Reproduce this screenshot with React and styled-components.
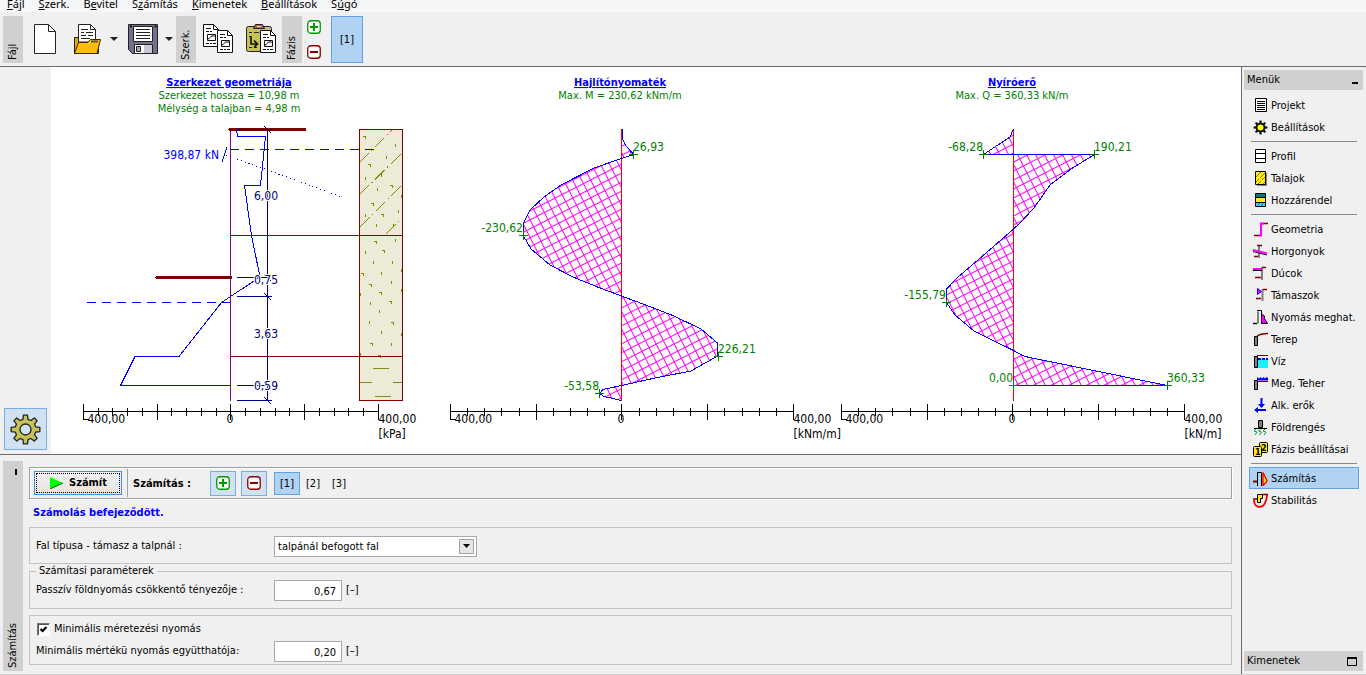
import React from 'react'
import styled, { createGlobalStyle } from 'styled-components'

const GlobalStyle = createGlobalStyle`
    * {
        box-sizing: border-box;
    }

    body {
        margin: 0;
        background: #f0f0f0;
        color: #000;
        font-family: "DejaVu Sans Condensed", "DejaVu Sans", sans-serif;
        font-size: 11px;
        line-height: 14px;
    }

    button, input, select {
        font: inherit;
        color: inherit;
    }
`

const line = '#6d6a70'

const Page = styled.div`
    display: flex;
    flex-direction: column;
    min-height: 100vh;
    border-bottom: 1px solid #d0d0d0;
`

const MenuBar = styled.nav`
    display: flex;
    align-items: flex-end;
    gap: 14px;
    height: 12px;
    padding-left: 7px;
    overflow: hidden;
    background: #f5f6f8;
    font-family: "Noto Sans", sans-serif;
    font-size: 11px;
    line-height: 16px;
`

const MenuLink = styled.a`
    color: #000;
    text-decoration: none;
`

const ToolBar = styled.header`
    display: flex;
    align-items: center;
    height: 55px;
    padding: 0 3px;
    border-bottom: 1px solid ${line};
`

const ToolTab = styled.div`
    display: flex;
    align-items: center;
    justify-content: flex-start;
    width: 20px;
    height: 47px;
    padding: 3px 0;
    background: #d0d0d0;
    writing-mode: vertical-rl;
    transform: rotate(180deg);
    line-height: 20px;
`

const ToolGroup = styled.div`
    display: flex;
    align-items: center;
    gap: ${props => props.$gap || 0}px;
    padding: 0 ${props => props.$right || 0}px 0 ${props => props.$left || 0}px;
`

const ToolButton = styled.button`
    display: flex;
    padding: 0;
    border: 0;
    background: none;
`

const StackGroup = styled.div`
    display: flex;
    flex-direction: column;
    gap: 11px;
    padding: 0 10px 0 5px;
`

const StageButton = styled.button`
    display: flex;
    align-items: center;
    justify-content: center;
    width: ${props => props.$big ? 32 : 26}px;
    height: ${props => props.$big ? 47 : 23}px;
    padding: 2px 0 0;
    border: 1px solid ${props => props.$active ? '#62a2e4' : 'transparent'};
    background: ${props => props.$active ? '#b1d3f3' : 'transparent'};
`

const Body = styled.div`
    display: flex;
    flex: 1;
`

const Main = styled.main`
    display: flex;
    flex: 1;
    flex-direction: column;
    min-width: 0;
`

const DrawingRow = styled.section`
    display: flex;
    flex: 1;
    min-height: 0;
    border-bottom: 1px solid ${line};
`

const DrawingTools = styled.div`
    display: flex;
    align-items: flex-end;
    width: 51px;
    padding: 4px;
`

const GearButton = styled.button`
    display: flex;
    align-items: center;
    justify-content: center;
    width: 43px;
    height: 42px;
    padding: 0;
    border: 1px solid #78aee5;
    background: #d0e1f2;
`

const Canvas = styled.div`
    display: flex;
    flex: 1;
    min-width: 0;
    background: #fff;

    svg {
        width: 100%;
        height: 100%;
    }
`

const Label = styled.text`
    fill: ${props => props.$color || '#000'};
    font-size: ${props => props.$small ? 11 : 12}px;
    font-weight: ${props => props.$bold ? 'bold' : 'normal'};
    text-decoration: ${props => props.$bold ? 'underline' : 'none'};
    text-anchor: ${props => props.$anchor || 'start'};
    paint-order: stroke;
    stroke: ${props => props.$halo ? '#fff' : 'none'};
    stroke-width: 2px;
`

const Frame = styled.section`
    display: flex;
    padding: 6px 9px 3px 3px;
`

const FrameSide = styled.div`
    display: flex;
    flex-direction: column;
    align-items: center;
    justify-content: space-between;
    width: 20px;
    padding: 8px 0 3px 0;
    background: #d0d0d0;

    > i {
        width: 2px;
        height: 6px;
        margin-left: 5px;
        background: #000;
    }

    > span {
        writing-mode: vertical-rl;
        transform: rotate(180deg);
        line-height: 20px;
    }
`

const FrameBody = styled.div`
    flex: 1;
    min-width: 0;
    padding: 6px 0 6px 6px;
`

const CalcBar = styled.div`
    display: flex;
    align-items: center;
    height: 32px;
    padding-left: 4px;
    border: 1px solid #a0a0a0;
    box-shadow: inset 1px 1px #fff, 1px 1px #fff;
`

const RunButton = styled.button`
    display: flex;
    align-items: center;
    justify-content: center;
    gap: 6px;
    width: 88px;
    height: 24px;
    padding: 0;
    border: 1px solid #3a92ea;
    outline: 1px dotted #000;
    outline-offset: -3px;
    background: linear-gradient(#f2f2f2, #e4e4e4);
    font-weight: bold;
`

const BarLine = styled.div`
    width: 1px;
    height: 28px;
    margin: 0 5px;
    background: #a0a0a0;
`

const BarTitle = styled.div`
    width: 77px;
    padding-top: 2px;
    font-weight: bold;
`

const StepButton = styled.button`
    display: flex;
    align-items: center;
    justify-content: center;
    width: 26px;
    height: 25px;
    margin-right: ${props => props.$last ? 7 : 5}px;
    padding: 0;
    border: 1px solid #78aee5;
    background: #d0e1f2;
`

const Message = styled.p`
    margin: 0;
    padding: 0 4px;
    color: #00f;
    font-weight: bold;
    line-height: 28px;
`

const Box = styled.div`
    padding: ${props => props.$dense ? '6px 6px 2px' : '8px 6px 6px'};
    border: 1px solid #c3c3c3;
`

const Group = styled.fieldset`
    margin: 0 0 6px;
    padding: 2px 6px 7px;
    border: 1px solid #c3c3c3;

    legend {
        padding: 0 3px;
        line-height: 14px;
    }
`

const Row = styled.div`
    display: grid;
    grid-template-columns: 238px auto 1fr;
    align-items: center;
    height: 21px;

    > label {
        padding-bottom: 2px;
    }
`

const SelectWrap = styled.div`
    display: flex;
    align-items: center;
    width: 203px;
    height: 21px;
    border: 1px solid #a9a9b0;
    background: #fff;

    select {
        flex: 1;
        height: 19px;
        padding: 0 3px;
        border: 0;
        background: none;
        appearance: none;
    }

    svg {
        margin-right: 2px;
    }
`

const NumberBox = styled.input`
    width: 68px;
    height: 21px;
    padding: 2px 5px 0;
    border: 1px solid #a9a9b0;
    background: #fff;
    text-align: right;
`

const Unit = styled.span`
    padding: 0 0 2px 4px;
`

const CheckRow = styled.label`
    display: flex;
    align-items: center;
    gap: 4px;
    height: 14px;
    margin-bottom: 5px;
    padding-left: 1px;
`

const Check = styled.input`
    width: 13px;
    height: 13px;
    margin: 0;
    border: 1px solid;
    border-color: #777 #fff #fff #777;
    box-shadow: inset 1px 1px #555;
    background: #fff;
    appearance: none;

    &:checked {
        background: #fff url("data:image/svg+xml,%3Csvg xmlns='http://www.w3.org/2000/svg' viewBox='0 0 11 11'%3E%3Cpath d='M2.5 5l2 2 4-4' fill='none' stroke='%23000' stroke-width='2.2'/%3E%3C/svg%3E") center / 11px;
    }
`

const Sidebar = styled.aside`
    display: flex;
    flex-direction: column;
    width: 125px;
    padding: 3px 3px 3px 2px;
    border-left: 1px solid ${line};
`

const SideHead = styled.h2`
    display: flex;
    align-items: center;
    justify-content: space-between;
    height: 20px;
    margin: 0;
    padding: 0 5px 0 3px;
    background: #d0d0d0;
    font-size: 11px;
    font-weight: normal;
`

const SideList = styled.div`
    display: flex;
    flex: 1;
    flex-direction: column;
    padding: 4px 4px 0 5px;

    hr {
        width: 106px;
        height: 1px;
        margin: 3px 2px;
        border: 0;
        background: #8a8a8a;
    }
`

const SideItem = styled.button`
    display: flex;
    align-items: center;
    gap: 3px;
    height: 22px;
    padding: 0 2px;
    border: 1px solid ${props => props.$active ? '#62a2e4' : 'transparent'};
    background: ${props => props.$active ? '#b1d3f3' : 'none'};
    white-space: nowrap;

    svg {
        flex: none;
    }

    span {
        padding-top: 2px;
    }
`

/* ---------- icons ---------- */

function Svg ({ w = 16, h = w, children, ...rest }) {
    return (
        <svg width={w} height={h} viewBox={`0 0 ${w} ${h}`} fill="none" aria-hidden="true" {...rest}>
            {children}
        </svg>
    )
}

const PlusIcon = () => (
    <Svg w={14}>
        <rect x=".75" y=".75" width="12.5" height="12.5" rx="3" fill="#fff" stroke="#009a00" strokeWidth="1.3" />
        <path d="M7 3v8M3 7h8" stroke="#009a00" strokeWidth="2" />
    </Svg>
)

const MinusIcon = () => (
    <Svg w={14}>
        <rect x=".75" y=".75" width="12.5" height="12.5" rx="3" fill="#fff" stroke="#900000" strokeWidth="1.3" />
        <path d="M3 7h8" stroke="#900000" strokeWidth="2" />
    </Svg>
)

const NewIcon = () => (
    <Svg w={23} h={31}>
        <path d="M.5.5h14l7 7v22h-21z" fill="#fff" stroke="#222" />
        <path d="M14.5.5v7h7" stroke="#222" />
    </Svg>
)

const OpenIcon = () => (
    <Svg w={29} h={31}>
        <path d="M1.5 29.5v-16h5l2 2h17v14z" fill="#e8a400" stroke="#222" />
        <path d="M5.5 18V.5h12l5 5V18z" fill="#fff" stroke="#222" />
        <path d="M17.5.5v5h5" stroke="#222" />
        <path d="M8 5.5h7M8 8.5h3M13 8.5h7M8 11.5h5M15 11.5h5M8 14.5h9" stroke="#222" />
        <path d="M1.5 29.5l4-11h9l3-3h10l-3.5 14z" fill="#ffbc0a" stroke="#3a2c00" />
        <path d="M18 17.5h7" stroke="#555" strokeWidth="2" />
    </Svg>
)

const SaveIcon = () => (
    <Svg w={31} h={31}>
        <path d="M.5.5h29v29h-25l-4-4z" fill="#74718f" stroke="#222" />
        <path d="M5.5 2.5h19v15h-19z" fill="#fff" stroke="#222" />
        <path d="M8 5.5h14M8 8.5h14M8 11.5h14M8 14.5h14" stroke="#222" />
        <path d="M2 2.5h2M26.5 2.5h2" stroke="#111" strokeWidth="2" />
        <path d="M6.5 29.5v-9h18v9z" fill="#fff" stroke="#222" />
        <path d="M16 21h8v8h-8z" fill="#c9c9d4" />
        <path d="M8.5 22.5h4v5h-4z" fill="#aaa" stroke="#222" />
    </Svg>
)

const Sheet = ({ x, y }) => (
    <g transform={`translate(${x} ${y})`}>
        <path d="M.5.5h10l5 5v17h-15z" fill="#fff" stroke="#111" />
        <path d="M10.5.5v5h5" stroke="#111" />
        <path d="M3 4.5h5M3 7.5h3M7 7.5h2M3 19.5h3M7 19.5h2M10 19.5h3" stroke="#111" />
        <path d="M4.5 10.5h8v6h-8z" stroke="#111" />
        <path d="M5 15c2 0 2-3 4-3h3" stroke="#111" />
    </g>
)

const CopyIcon = () => (
    <Svg w={31} h={31}>
        <Sheet x={0} y={0} />
        <Sheet x={14} y={6} />
    </Svg>
)

const PasteIcon = () => (
    <Svg w={31} h={31}>
        <rect x=".5" y="2.5" width="25" height="25" rx="2" fill="#c6c256" stroke="#222" />
        <path d="M7.5 4.5l2-4h7l2 4z" fill="#b07020" stroke="#222" />
        <path d="M11 2.5h4" stroke="#ddd" />
        <path d="M3 8.5h3M8 8.5h5M3 12.5h3M3 23.5h3M8 23.5h3" stroke="#222" />
        <path d="M5 13v7h6M8 16.5l3.5 3.5L8 23.5" stroke="#111" strokeWidth="1.6" />
        <Sheet x={14} y={6} />
    </Svg>
)

const CaretIcon = () => (
    <Svg w={8} h={4}><path d="M0 0h8L4 4z" fill="#222" /></Svg>
)

function gearPath (c, outer, inner, teeth) {
    const pts = []
    for (let i = 0; i < teeth; i++) {
        const mid = i * 2 * Math.PI / teeth
        const half = Math.PI / teeth
        const steps = [[-0.62, inner], [-0.36, outer], [0.36, outer], [0.62, inner]]
        steps.forEach(([k, r]) => {
            const a = mid + half * k
            pts.push(`${(c + r * Math.sin(a)).toFixed(2)} ${(c - r * Math.cos(a)).toFixed(2)}`)
        })
    }
    return `M${pts.join('L')}z`
}

const GearIcon = () => (
    <Svg w={31}>
        <path d={gearPath(15.5, 14.5, 10.5, 8)} fill="#c6c256" stroke="#222" strokeWidth="1.3" strokeLinejoin="round" />
        <circle cx="15.5" cy="15.5" r="5.5" fill="#d0e1f2" stroke="#222" strokeWidth="1.3" />
    </Svg>
)

const block = <path d="M2.5 5.5h3v9h-3z" fill="#808080" stroke="#000" />

const icons = {
    project: <>
        <path d="M3.5 1.5h11v13h-11z" fill="#fff" stroke="#000" />
        <path d="M5 4.5h8M5 6.5h8M5 8.5h8M5 10.5h8M5 12.5h8" stroke="#000" />
    </>,
    settings: <>
        <path d={gearPath(8.5, 7, 4.9, 8)} fill="#111" />
        <circle cx="8.5" cy="8.5" r="3" fill="#ff0" />
    </>,
    profile: <>
        <path d="M3.5 1.5h10v13h-10z" fill="#fff" stroke="#000" />
        <path d="M3 5.5h11M3 10.5h11" stroke="#000" />
    </>,
    soils: <>
        <path d="M5 3h10v13H5z" fill="#888" />
        <path d="M3.5 1.5h10v13h-10z" fill="#ffec1a" stroke="#000" />
        <path d="M4 7l5-5M4 12l3-3M8 8l5-5M6 14l3-3M10 10l3-3M11 14l2-2" stroke="#887700" />
    </>,
    assign: <>
        <path d="M3.5 1.5h10v4h-10z" fill="#008080" stroke="#000" />
        <path d="M3.5 5.5h10v5h-10z" fill="#ffec1a" stroke="#000" />
        <path d="M3.5 10.5h10v4h-10z" fill="#20e0f0" stroke="#000" />
        <path d="M6 13l2-2M9 14l2-2M6 4h2M10 3h2" stroke="#006868" />
    </>,
    geometry: <>
        <path d="M2 14.5h6M10 2.5h6" stroke="#800000" strokeWidth="1.5" />
        <path d="M12 2.500H9v12H7" stroke="#f0f" strokeWidth="2" />
    </>,
    anchors: <>
        <path d="M7 2v13" stroke="#808080" strokeWidth="2" />
        <path d="M5 2.5h5M2 13.5h4" stroke="#800000" strokeWidth="1.5" />
        <path d="M1 8.5l14 3.5" stroke="#000" />
        <path d="M1 7l14 3.5" stroke="#f0f" strokeWidth="2" />
    </>,
    struts: <>
        <path d="M10 2v13" stroke="#808080" strokeWidth="2" />
        <path d="M10 2.5h4M3 12.5h6" stroke="#800000" strokeWidth="1.5" />
        <path d="M1 5.5h9" stroke="#000" />
        <path d="M1 4h9" stroke="#f0f" strokeWidth="2" />
    </>,
    supports: <>
        <path d="M10.5 2v12" stroke="#808080" strokeWidth="2" />
        <path d="M11 2.5h4M4 11.5h5" stroke="#800000" strokeWidth="1.5" />
        <path d="M5.5 1.5v6l4-3z" fill="#f0f" stroke="#00f" />
    </>,
    pressure: <>
        <path d="M1 14.5h4" stroke="#000" strokeWidth="1.5" />
        <path d="M6 2.5v12" stroke="#808080" strokeWidth="2" />
        <path d="M5 1.5h4.5v13" stroke="#000" />
        <path d="M9.5 5l3 2v2.5l3 5h-6z" fill="#f0f" stroke="#000" />
    </>,
    terrain: <>
        {block}
        <path d="M5 5.5c2-2 4-3 11-3" stroke="#800000" strokeWidth="1.5" />
    </>,
    water: <>
        <path d="M6 6h10v9H6z" fill="#1cf0ff" />
        <path d="M2.5 3.5h3v11h-3z" fill="#808080" stroke="#000" />
        <path d="M5 2.5h11" stroke="#800000" />
        <path d="M6 6h10" stroke="#00f" strokeWidth="2" strokeDasharray="3 1" />
    </>,
    surcharge: <>
        {block}
        <path d="M5 6.5h11" stroke="#800000" />
        <path d="M5 5.5V2l2 1.500L8.500 2 10 3.500 11.500 2 13 3.500 14.500 2 16 3v2.500z" fill="#00f" />
    </>,
    forces: <>
        <path d="M9.5 1v9M14 13H5" stroke="#00f" strokeWidth="2" />
        <path d="M6 7h7l-3.500 4zM6 10v6l-4-3z" fill="#00f" />
    </>,
    quake: <>
        <path d="M6.5 1.5h4v7h-4z" fill="#808080" stroke="#000" />
        <path d="M2 9.5h13" stroke="#000" />
        <path d="M4 10l-2 2 3 1-2 3M8.500 10l-2 2 3 1-2 3M13 10l-2 2 3 1-2 3" stroke="#00a030" />
    </>,
    stage: <>
        <rect x="7.5" y="1.5" width="8" height="10" rx="1" fill="#ffec1a" stroke="#000" />
        <rect x="1.5" y="5.5" width="8" height="10" rx="1" fill="#ffec1a" stroke="#000" />
        <text x="3" y="14" fontSize="9" fontWeight="bold" fill="#000">1</text>
        <text x="9" y="10" fontSize="9" fontWeight="bold" fill="#000">2</text>
    </>,
    analysis: <>
        <path d="M1 11.5h4" stroke="#800000" strokeWidth="2" />
        <path d="M5.5 16V2.500h4V16" stroke="#000" />
        <path d="M11 2.5l4 8-1 2-3 3z" fill="#ffec1a" stroke="#f00" strokeWidth="1.4" />
    </>,
    stability: <>
        <path d="M5.5 2.5h5v4h-2v4h-3z" fill="#ffec1a" stroke="#000" />
        <path d="M1 7h4M10 2.5h6" stroke="#800000" strokeWidth="1.5" />
        <path d="M2 8c0 8 8 9 11 3 1-2 2-5 2-8" stroke="#f00" strokeWidth="1.8" />
    </>
}

/* ---------- drawings ---------- */

const green = '#008000'
const navy = '#000080'
const maroon = '#800000'

const specks = [
    [364, 136], [395, 145], [386, 157], [369, 164], [381, 175], [365, 178], [391, 185], [377, 189],
    [401, 196], [372, 203], [398, 211], [365, 215], [382, 214], [393, 225], [376, 225], [375, 241],
    [395, 240], [365, 252], [383, 250], [373, 262], [392, 262], [362, 273], [381, 273], [401, 270],
    [370, 284], [391, 282], [360, 294], [380, 292], [401, 290], [370, 303], [390, 301], [379, 311],
    [369, 322], [392, 322], [381, 332], [401, 334], [371, 343], [391, 344], [360, 354], [379, 355]
]

function Scale ({ from, to, unit }) {
    const step = (to - from) / 20
    const mid = Math.floor((from + to) / 2)
    const ticks = Array.from({ length: 21 }, (_, i) => {
        const x = Math.ceil(from + i * step - 1) + 0.5
        return i % 5 === 0 ? `M${x} 404v16` : `M${x} 408v8`
    }).join('')

    return (
        <g>
            <path d={`M${from} 411.5H${to}${ticks}M${from} 419.5h5`} stroke="#000" />
            <Label x={from} y="423">-400,00</Label>
            <Label x={mid - 1} y="423" $anchor="middle">0</Label>
            <Label x={to} y="423">400,00</Label>
            <Label x={to} y="438">{unit}</Label>
        </g>
    )
}

function Heading ({ x, title, lines }) {
    return (
        <g>
            <Label x={x} y="86" $small $bold $color="#00f" $anchor="middle">{title}</Label>
            {lines.map((text, i) => (
                <Label key={text} x={x} y={99 + i * 13} $small $color={green} $anchor="middle">{text}</Label>
            ))}
        </g>
    )
}

function GeometryChart () {
    return (
        <g>
            <Heading x={229} title="Szerkezet geometriája" lines={['Szerkezet hossza = 10,98 m', 'Mélység a talajban = 4,98 m']} />
            <rect x="359.5" y="129.5" width="43" height="271" fill="#ecebd7" />
            <g stroke="#8a8a00">
                <path d="M359 163l34-34M359 195l43-42M360 227l42-42M386 234l16-16" strokeDasharray="14 3 2 3" />
                <path d="M373 368.5h16M359 382.5h13M393 382.5h9M375 396.5h16" />
                <path d={specks.map(([x, y], i) => i % 3 ? `M${x + 0.5} ${y - 1}v3` : `M${x - 1} ${y + 0.5}h3m-1 0v2`).join('')} />
            </g>
            <path d="M359.5 129.5h43v271h-43zM230 235.5h172M230 356.5h172" stroke={maroon} />
            <path d="M230.5 129v272" stroke="#800080" />
            <path d="M230 129.5h75M157 277.5h74" stroke={maroon} strokeWidth="3" strokeLinecap="round" />
            <path d="M236.5 129.5l1 7h28l-5 49h-16l7 50 8.5 41.5L221.5 302.5l-42.5 54h-44l-14.5 29h110" stroke="#00f" />
            <path d="M230 149.5h146M87 302.5h143" stroke="#00f" strokeDasharray="9 6" />
            <path d="M226 155l116 42" stroke="#00f" strokeDasharray="1 3" />
            <path d="M222 162l5-15" stroke="#00f" />
            <g stroke={navy}>
                <path d="M267.5 129v272M237 129.5h35M237 277.5h30M237 296.5h35M237 385.5h30M237 400.5h35" />
                <path d="M264 126l7 7M264 274l7 7M264 293l7 7M264 382l7 7M264 397l7 7" />
            </g>
            <Label x="219" y="159" $color="#00f" $anchor="end">398,87 kN</Label>
            <Label x="266" y="200" $color={navy} $anchor="middle" $halo>6,00</Label>
            <Label x="266" y="284" $color={navy} $anchor="middle" $halo>0,75</Label>
            <Label x="266" y="338" $color={navy} $anchor="middle" $halo>3,63</Label>
            <Label x="266" y="390" $color={navy} $anchor="middle" $halo>0,59</Label>
            <Scale from={83.5} to={378.5} unit="[kPa]" />
        </g>
    )
}

function ForceChart ({ axis, heading, lines, curve, peaks, from, to, unit }) {
    return (
        <g>
            <Heading x={axis - 1} title={heading} lines={lines} />
            <path d={`${curve}z`} fill="url(#hatch)" />
            <path d={`M${axis + 0.5} 129v272`} stroke="#f00" />
            <path d={curve} stroke="#00f" />
            {peaks.map(([x, y, text, anchor]) => (
                <g key={text}>
                    <path d={`M${x - 4} ${y + 0.5}h9M${x + 0.5} ${y - 4}v9`} stroke={green} />
                    <Label x={x} y={y - 3} $color={green} $anchor={anchor}>{text}</Label>
                </g>
            ))}
            <Scale from={from} to={to} unit={unit} />
        </g>
    )
}

const momentCurve = 'M622 129v9l4 8 8 8.500-12.500 4L594 168l-33 17-17 12-14 13-6.500 13v13l7.500 13 19 16 23 12 27 11 21.500 8 29.500 11 23 9 27 13 16.500 14v13L691 371l-36 7-33.500 7.500-18.500 4-3.500 4 4.500 3 17.500 4'

const shearCurve = 'M1013.500 129l-3.500 8-26.500 17.500h111L1071 169l-21 16-16 23-15 16-5.500 5-12.500 11-33.500 29-10.500 9-11 11.500V302l9 13 19 16 39.500 19.500 11.500 6 142 29h-153.500'

function Drawings () {
    return (
        <svg viewBox="51 67 1190 387" fill="none" shapeRendering="crispEdges" role="img" aria-label="Számítás">
            <defs>
                <pattern id="hatch" width="8" height="8" patternUnits="userSpaceOnUse" patternTransform="rotate(-27)">
                    <path d="M0 4.5h8M4.5 0v8" stroke="#f0f" />
                </pattern>
            </defs>
            <GeometryChart />
            <ForceChart
                axis={621}
                heading="Hajlítónyomaték"
                lines={['Max. M = 230,62 kNm/m']}
                curve={momentCurve}
                peaks={[
                    [633, 154, '26,93'],
                    [523, 235, '-230,62', 'end'],
                    [718, 356, '226,21'],
                    [599, 393, '-53,58', 'end']
                ]}
                from={450.5}
                to={793.5}
                unit="[kNm/m]"
            />
            <ForceChart
                axis={1013}
                heading="Nyíróerő"
                lines={['Max. Q = 360,33 kN/m']}
                curve={shearCurve}
                peaks={[
                    [983, 154, '-68,28', 'end'],
                    [1094, 154, '190,21'],
                    [946, 302, '-155,79', 'end'],
                    [1013, 385, '0,00', 'end'],
                    [1167, 385, '360,33']
                ]}
                from={841.5}
                to={1184.5}
                unit="[kN/m]"
            />
        </svg>
    )
}

/* ---------- page ---------- */

const menus = [
    ['', 'F', 'ájl'],
    ['', 'S', 'zerk.'],
    ['B', 'e', 'vitel'],
    ['S', 'z', 'ámítás'],
    ['', 'K', 'imenetek'],
    ['', 'B', 'eállítások'],
    ['S', 'ú', 'gó']
]

const sideGroups = [
    [['project', 'Projekt'], ['settings', 'Beállítások']],
    [['profile', 'Profil'], ['soils', 'Talajok'], ['assign', 'Hozzárendel']],
    [
        ['geometry', 'Geometria'], ['anchors', 'Horgonyok'], ['struts', 'Dúcok'], ['supports', 'Támaszok'],
        ['pressure', 'Nyomás meghat.'], ['terrain', 'Terep'], ['water', 'Víz'], ['surcharge', 'Meg. Teher'],
        ['forces', 'Alk. erők'], ['quake', 'Földrengés'], ['stage', 'Fázis beállításai']
    ],
    [['analysis', 'Számítás'], ['stability', 'Stabilitás']]
]

function TopTools () {
    return (
        <ToolBar>
            <ToolTab>Fájl</ToolTab>
            <ToolGroup $left={11} $right={3}>
                <ToolGroup $right={16}><ToolButton aria-label="Új"><NewIcon /></ToolButton></ToolGroup>
                <ToolGroup $gap={8} $right={10}>
                    <ToolButton aria-label="Megnyitás"><OpenIcon /></ToolButton>
                    <ToolButton aria-label="Megnyitás lista"><CaretIcon /></ToolButton>
                </ToolGroup>
                <ToolGroup $gap={6}>
                    <ToolButton aria-label="Mentés"><SaveIcon /></ToolButton>
                    <ToolButton aria-label="Mentés lista"><CaretIcon /></ToolButton>
                </ToolGroup>
            </ToolGroup>
            <ToolTab>Szerk.</ToolTab>
            <ToolGroup $gap={12} $left={7} $right={5}>
                <ToolButton aria-label="Másolás"><CopyIcon /></ToolButton>
                <ToolButton aria-label="Beillesztés"><PasteIcon /></ToolButton>
            </ToolGroup>
            <ToolTab>Fázis</ToolTab>
            <StackGroup>
                <ToolButton aria-label="Fázis hozzáadása"><PlusIcon /></ToolButton>
                <ToolButton aria-label="Fázis törlése"><MinusIcon /></ToolButton>
            </StackGroup>
            <StageButton $big $active>[1]</StageButton>
        </ToolBar>
    )
}

function CalcFrame () {
    return (
        <Frame>
            <FrameSide><i /><span>Számítás</span></FrameSide>
            <FrameBody>
                <CalcBar>
                    <RunButton>
                        <Svg w={14} h={12}><path d="M1 0l13 6-13 6z" fill="#0f0" /><path d="M1 12l13-6" stroke="#060" /></Svg>
                        Számít
                    </RunButton>
                    <BarLine />
                    <BarTitle>Számítás :</BarTitle>
                    <StepButton aria-label="Számítás hozzáadása"><PlusIcon /></StepButton>
                    <StepButton $last aria-label="Számítás törlése"><MinusIcon /></StepButton>
                    <StageButton $active>[1]</StageButton>
                    <StageButton>[2]</StageButton>
                    <StageButton>[3]</StageButton>
                </CalcBar>
                <Message>Számolás befejeződött.</Message>
                <Box>
                    <Row>
                        <label htmlFor="wall">Fal típusa - támasz a talpnál :</label>
                        <SelectWrap>
                            <select id="wall"><option>talpánál befogott fal</option></select>
                            <Svg w={15}>
                                <path d="M.5.5h14v14H.5z" fill="#e6e6e6" stroke="#a0a0a0" />
                                <path d="M4 5h7l-3.500 4z" fill="#000" />
                            </Svg>
                        </SelectWrap>
                    </Row>
                </Box>
                <Group>
                    <legend>Számítasi paraméterek</legend>
                    <Row>
                        <label htmlFor="passive">Passzív földnyomás csökkentő tényezője :</label>
                        <NumberBox id="passive" defaultValue="0,67" />
                        <Unit>[–]</Unit>
                    </Row>
                </Group>
                <Box $dense>
                    <CheckRow><Check type="checkbox" defaultChecked />Minimális méretezési nyomás</CheckRow>
                    <Row>
                        <label htmlFor="minimum">Minimális mértékü nyomás együtthatója:</label>
                        <NumberBox id="minimum" defaultValue="0,20" />
                        <Unit>[–]</Unit>
                    </Row>
                </Box>
            </FrameBody>
        </Frame>
    )
}

function SideMenu () {
    return (
        <Sidebar>
            <SideHead>Menük<Svg w={6} h={8}><path d="M0 7h6" stroke="#000" strokeWidth="2" /></Svg></SideHead>
            <SideList>
                {sideGroups.map((group, i) => (
                    <React.Fragment key={i}>
                        {i > 0 && <hr />}
                        {group.map(([icon, text]) => (
                            <SideItem key={icon} $active={icon === 'analysis'}>
                                <Svg>{icons[icon]}</Svg>
                                <span>{text}</span>
                            </SideItem>
                        ))}
                    </React.Fragment>
                ))}
            </SideList>
            <SideHead>Kimenetek<Svg w={11} h={9}><path d="M.5 1v7.500h9V1" stroke="#000" /><path d="M0 1h10" stroke="#000" strokeWidth="2" /></Svg></SideHead>
        </Sidebar>
    )
}

export default function App () {
    return (
        <Page>
            <GlobalStyle />
            <MenuBar>
                {menus.map(([before, key, after]) => (
                    <MenuLink key={before + key + after} href="#">{before}<u>{key}</u>{after}</MenuLink>
                ))}
            </MenuBar>
            <TopTools />
            <Body>
                <Main>
                    <DrawingRow>
                        <DrawingTools>
                            <GearButton aria-label="Rajz beállításai"><GearIcon /></GearButton>
                        </DrawingTools>
                        <Canvas><Drawings /></Canvas>
                    </DrawingRow>
                    <CalcFrame />
                </Main>
                <SideMenu />
            </Body>
        </Page>
    )
}
